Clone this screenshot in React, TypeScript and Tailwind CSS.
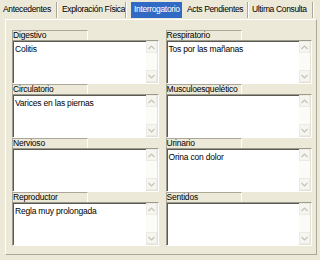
import React from 'react';

const font = { fontFamily: '"Liberation Sans", Arial, sans-serif' };

function Chevron({ up }: { up?: boolean }) {
    return (
        <svg width="7" height="5" viewBox="0 0 7 5" className="block">
            <path
                d={up ? 'M0.5 4 L3.5 1 L6.5 4' : 'M0.5 1 L3.5 4 L6.5 1'}
                fill="none"
                stroke="#c4c3b8"
                strokeWidth="1.2"
            />
        </svg>
    );
}

function Field({ label, value }: { label: string; value: string }) {
    return (
        <div className="flex flex-col">
            <div className="h-[10px] w-[76px] border-t border-l border-[#aca899] border-r border-r-white flex items-center text-[8.5px] leading-none text-black tracking-[-0.2px] whitespace-nowrap">
                {label}
            </div>
            <div className="h-[44px] flex border border-t-[#9d9a8c] border-l-[#9d9a8c] border-b-white border-r-white bg-white">
                <div className="flex-1 border-t border-l border-[#5a5a55] border-b-0 border-r-0 px-[1px] pt-[3px] text-[8.5px] leading-none text-black whitespace-nowrap tracking-[-0.2px]">
                    {value}
                </div>
                <div className="w-[12px] flex flex-col bg-[#fbfbf8] border-r border-b border-[#e4e2d6]">
                    <div className="h-[12px] flex items-center justify-center bg-[#f6f5f0] border border-[#ecebe3]">
                        <Chevron up />
                    </div>
                    <div className="flex-1" />
                    <div className="h-[12px] flex items-center justify-center bg-[#f6f5f0] border border-[#ecebe3]">
                        <Chevron />
                    </div>
                </div>
            </div>
        </div>
    );
}

function Sep() {
    return <div className="h-[16px] w-[2px] border-l border-[#aca899] border-r border-r-white shrink-0" />;
}

export default function App() {
    const fields = [
        ['Digestivo', 'Colitis'],
        ['Respiratorio', 'Tos por las mañanas'],
        ['Circulatorio', 'Varices en las piernas'],
        ['Musculoesquelético', ''],
        ['Nervioso', ''],
        ['Urinario', 'Orina con dolor'],
        ['Reproductor', 'Regla muy prolongada'],
        ['Sentidos', ''],
    ];

    return (
        <div className="w-[320px] h-[260px] bg-[#ece9d8] overflow-hidden" style={font}>
            {/* Tabs */}
            <div className="h-[19px] flex items-center text-[8.5px] text-black whitespace-nowrap tracking-[-0.35px]">
                <div className="w-[56px] shrink-0 pl-[3px]">Antecedentes</div>
                <Sep />
                <div className="w-[67px] shrink-0 pl-[4px]">Exploración Física</div>
                <Sep />
                <div className="w-[4px] shrink-0" />
                <div className="h-[16px] w-[51px] shrink-0 bg-[#316ac5] text-white flex items-center pl-[3px]">Interrogatorio</div>
                <div className="w-[65px] shrink-0 pl-[5px]">Acts Pendientes</div>
                <Sep />
                <div className="w-[63px] shrink-0 pl-[3px]">Ultima Consulta</div>
                <Sep />
            </div>

            {/* Panel */}
            <div className="ml-[5px] w-[312px] h-[236px] border border-t-white border-l-white border-b-[#aca899] border-r-[#aca899]">
                <div className="pl-[6px] pr-[4px] pt-[10px] grid grid-cols-2 gap-x-[7px]">
                    {fields.map(([l, v]) => (
                        <Field key={l} label={l} value={v} />
                    ))}
                </div>
            </div>
        </div>
    );
}
